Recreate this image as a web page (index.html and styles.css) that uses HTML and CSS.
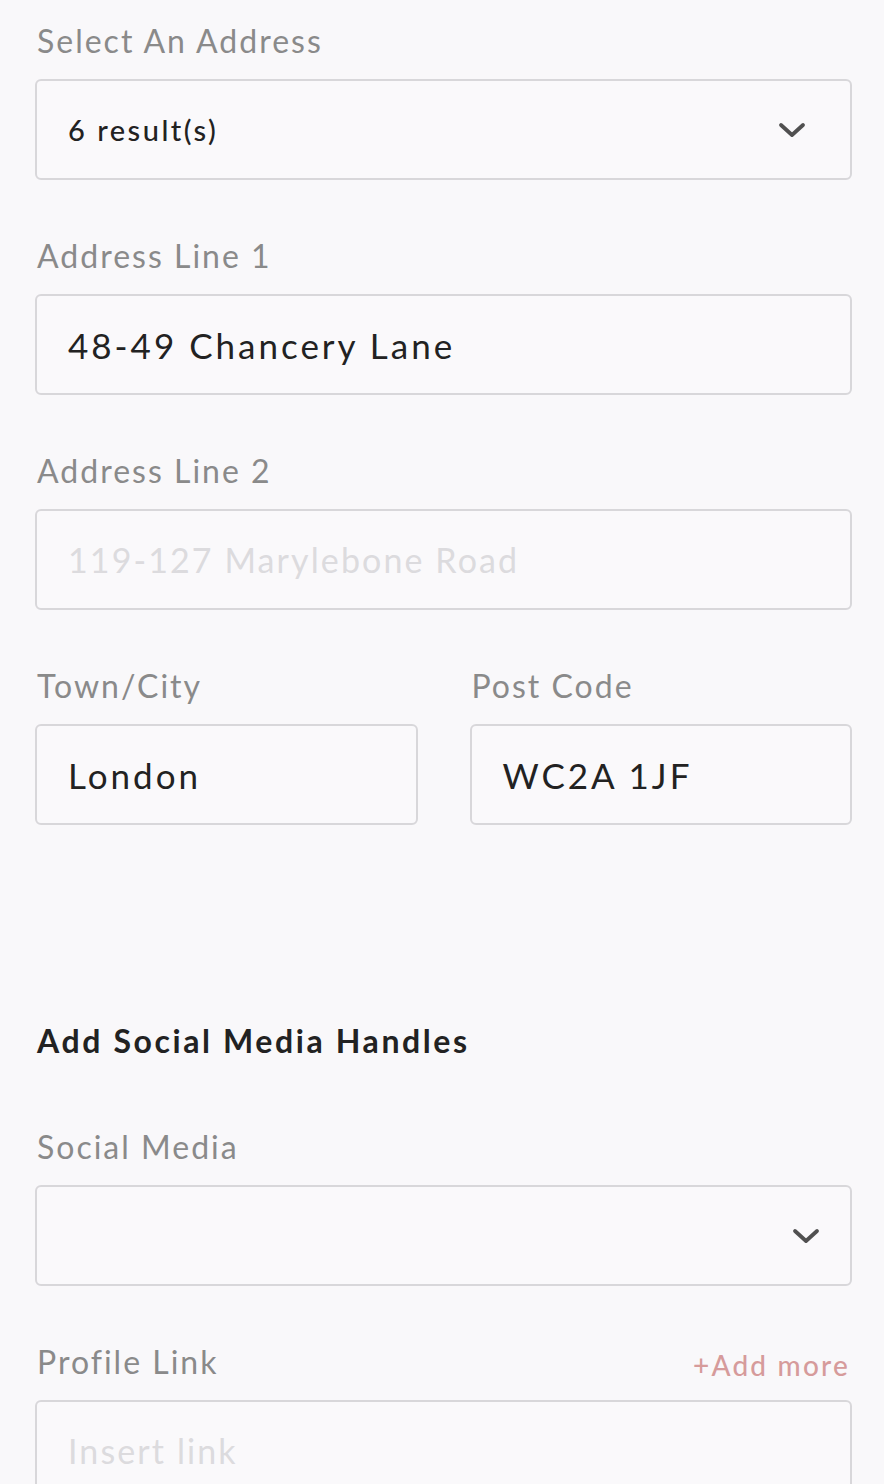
FILE: index.html
```html
<!DOCTYPE html>
<html lang="en">
<head>
  <meta charset="UTF-8" />
  <meta name="viewport" content="width=device-width, initial-scale=1.0"/>
  <title>Address Details</title>
  <link rel="stylesheet" href="styles.css">
</head>
<body>
  <form class="form">
    <!-- address lookup -->
    <div class="field">
      <label class="label">Select An Address</label>
      <div class="box select">
        <span class="select-value">6 result(s)</span>
        <svg class="chevron" width="28" height="16" viewBox="0 0 28 16">
          <path d="M3 3 L14 13 L25 3" fill="none" stroke="#505050" stroke-width="3.8" stroke-linecap="round" stroke-linejoin="round"/>
        </svg>
      </div>
    </div>

    <div class="field">
      <label class="label">Address Line 1</label>
      <div class="box"><span class="value">48-49 Chancery Lane</span></div>
    </div>

    <div class="field">
      <label class="label">Address Line 2</label>
      <div class="box"><span class="placeholder">119-127 Marylebone Road</span></div>
    </div>

    <div class="row">
      <div class="field">
        <label class="label">Town/City</label>
        <div class="box"><span class="value">London</span></div>
      </div>
      <div class="field">
        <label class="label">Post Code</label>
        <div class="box"><span class="value">WC2A 1JF</span></div>
      </div>
    </div>

    <!-- social media -->
    <h2 class="heading">Add Social Media Handles</h2>

    <div class="field">
      <label class="label">Social Media</label>
      <div class="box select social">
        <span></span>
        <svg class="chevron" width="28" height="16" viewBox="0 0 28 16">
          <path d="M3 3 L14 13 L25 3" fill="none" stroke="#505050" stroke-width="3.8" stroke-linecap="round" stroke-linejoin="round"/>
        </svg>
      </div>
    </div>

    <div class="field">
      <div class="label-row">
        <label class="label">Profile Link</label>
        <a class="add-more">+Add more</a>
      </div>
      <div class="box"><span class="placeholder">Insert link</span></div>
    </div>
  </form>
</body>
</html>
```
FILE: styles.css
```css
/* page */
body {
  margin: 0;
  background-color: #f9f8fa;
  font-family: Lato, "Open Sans", sans-serif;
  color: #222;
}

.form {
  padding: 26px 32px 0 35px;
}

/* label + box */
.field {
  margin-bottom: 61px;
}

.label {
  display: block;
  height: 30px;
  line-height: 30px;
  font-size: 32px;
  color: #8a8a8a;
  letter-spacing: 2px;
  margin: 0 0 23px 2px;
}

.label-row {
  display: flex;
  justify-content: space-between;
  align-items: flex-start;
}

.add-more {
  font-size: 28px;
  font-weight: 500;
  color: #d69b9b;
  letter-spacing: 2.2px;
  margin: 3px 2px 0 0;
  line-height: 30px;
}

.box {
  height: 97px;
  border: 2px solid #d8d7da;
  border-radius: 6px;
  background-color: #faf9fb;
  display: flex;
  align-items: center;
  padding: 0 31px;
}

.value {
  font-size: 35px;
  letter-spacing: 3px;
}

.placeholder {
  font-size: 34px;
  color: #dcdbde;
  letter-spacing: 2.1px;
}

/* select boxes */
.select {
  justify-content: space-between;
  padding-right: 44px;
}

.select-value {
  font-size: 29px;
  font-weight: 500;
  letter-spacing: 2.5px;
}

.social {
  padding-right: 30px;
}

/* two columns */
.row {
  display: grid;
  grid-template-columns: 1fr 1fr;
  gap: 52px;
}

.heading {
  font-size: 32px;
  font-weight: 700;
  letter-spacing: 2.6px;
  margin: 135px 0 71px 2px;
  line-height: 40px;
}
```
